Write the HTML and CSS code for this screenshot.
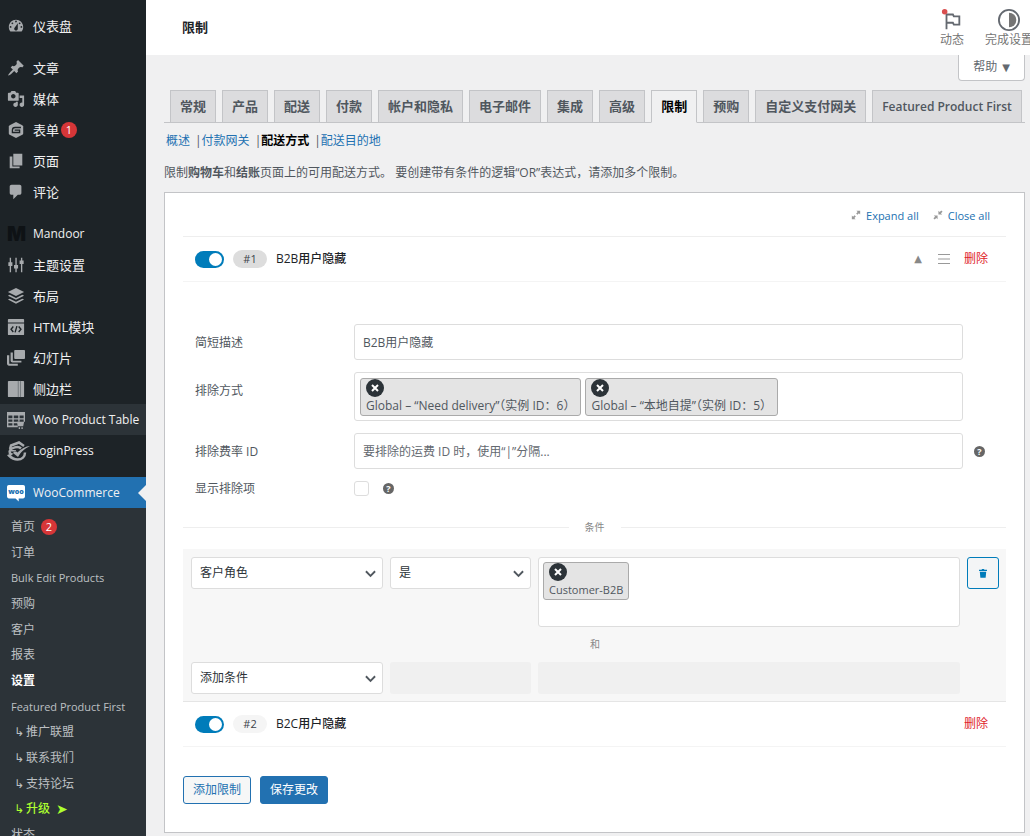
FILE: index.html
```html
<!DOCTYPE html>
<html lang="zh-CN">
<head>
  <meta charset="utf-8">
  <title>限制 - WooCommerce</title>
  <link rel="stylesheet" href="styles.css">
</head>
<body>
  <div class="admin">
    <nav class="sidebar">
      <ul class="menu">
        <li><a href="#"><svg class="icon" viewBox="0 0 20 20"><path d="M3.76 16h12.48c1.1-1.37 1.76-3.11 1.76-5 0-4.42-3.58-8-8-8s-8 3.58-8 8c0 1.89.66 3.63 1.76 5zM10 4c.55 0 1 .45 1 1s-.45 1-1 1-1-.45-1-1 .45-1 1-1zM6 6c.55 0 1 .45 1 1s-.45 1-1 1-1-.45-1-1 .45-1 1-1zm8 0c.55 0 1 .45 1 1s-.45 1-1 1-1-.45-1-1 .45-1 1-1zm-5.37 5.55L12 7v6c0 1.1-.9 2-2 2s-2-.9-2-2c0-.57.24-1.08.63-1.45zM4 10c.55 0 1 .45 1 1s-.45 1-1 1-1-.45-1-1 .45-1 1-1zm12 0c.55 0 1 .45 1 1s-.45 1-1 1-1-.45-1-1 .45-1 1-1z"/></svg>仪表盘</a></li>
        <li class="separator"></li>
        <li><a href="#"><svg class="icon" viewBox="0 0 20 20"><path d="M10.44 3.02l1.82-1.82 6.36 6.35-1.83 1.82c-1.05-.68-2.48-.57-3.41.36l-.75.75c-.92.93-1.04 2.35-.35 3.41l-1.83 1.82-2.41-2.41-2.8 2.79c-.42.42-3.38 2.71-3.8 2.29s1.86-3.39 2.28-3.81l2.79-2.79L4.1 9.36l1.83-1.82c1.05.69 2.48.57 3.4-.36l.75-.75c.93-.92 1.05-2.35.36-3.41z"/></svg>文章</a></li>
        <li><a href="#"><svg class="icon" viewBox="0 0 20 20"><path d="M13 11V4c0-.55-.45-1-1-1h-1.67L9 1H5L3.67 3H2c-.55 0-1 .45-1 1v7c0 .55.45 1 1 1h10c.55 0 1-.45 1-1zM7 4.5c1.38 0 2.5 1.12 2.5 2.5S8.38 9.5 7 9.5 4.5 8.38 4.5 7 5.62 4.5 7 4.5zM14 6h5v10.5c0 1.38-1.12 2.5-2.5 2.5S14 17.88 14 16.5s1.12-2.5 2.5-2.5c.17 0 .34.02.5.05V9h-3V6zm-4 8.05V13h2v3.5c0 1.38-1.12 2.5-2.5 2.5S7 17.88 7 16.5 8.12 14 9.5 14c.17 0 .34.02.5.05z"/></svg>媒体</a></li>
        <li><a href="#"><svg class="icon" viewBox="0 0 20 20"><path d="M10 1l7 3.600q1 .6 1 1.600v7.600q0 1-1 1.600L10 19l-7-3.600q-1-.6-1-1.600V6.200q0-1 1-1.600z"/><path class="cut" d="M15.500 7.200H9q-3 0-3 3v2.600h8v-2.600H8.500"/></svg>表单<span class="badge">1</span></a></li>
        <li><a href="#"><svg class="icon" viewBox="0 0 20 20"><path d="M7 2h10v13H7zM3 5h3v11h8v2H3z"/></svg>页面</a></li>
        <li><a href="#"><svg class="icon" viewBox="0 0 20 20"><path d="M5 2h9c1.100 0 2 .9 2 2v7c0 1.100-.9 2-2 2h-2l-5 5v-5H5c-1.100 0-2-.9-2-2V4c0-1.100.9-2 2-2z"/></svg>评论</a></li>
        <li class="separator"></li>
        <li><a href="#" class="latin"><span class="icon mandoor-mark" aria-hidden="true">M</span>Mandoor</a></li>
        <li><a href="#"><svg class="icon" viewBox="0 0 20 20"><path d="M3 2h1.500v5H6v4H4.500v7H3v-7H1.500V7H3zM9.300 2h1.500v8h1.500v4h-1.500v4H9.300v-4H7.800v-4h1.500zM15.500 2H17v3h1.500v4H17v9h-1.500V9H14V5h1.500z"/></svg>主题设置</a></li>
        <li><a href="#"><svg class="icon" viewBox="0 0 20 20"><path d="M10 1l9 4.500-9 4.500-9-4.500zM3 8.700l7 3.500 7-3.500 2 1-9 4.600-9-4.600zM3 13l7 3.500 7-3.500 2 1-9 4.600L1 14z"/></svg>布局</a></li>
        <li><a href="#"><svg class="icon" viewBox="0 0 20 20"><path d="M2 1h16q1 0 1 1v3H1V2q0-1 1-1zM1 6h18v12q0 1-1 1H2q-1 0-1-1z"/><path class="cut" d="M7 9.500L4.500 12.500 7 15.500M13 9.500l2.500 3-2.500 3M11 9l-2 7"/></svg>HTML模块</a></li>
        <li><a href="#"><svg class="icon" viewBox="0 0 20 20"><path d="M9 1h10q1 0 1 1v8q0 1-1 1H9q-1 0-1-1V2q0-1 1-1zM4 4h2.500v9H16v2H6q-2 0-2-2zM0 7h2.500v9.500H12v2H2q-2 0-2-2z"/></svg>幻灯片</a></li>
        <li><a href="#"><svg class="icon" viewBox="0 0 20 20"><path d="M2 1h16q1 0 1 1v16q0 1-1 1H2q-1 0-1-1V2q0-1 1-1z"/><path class="fold" d="M12.500 1v18M15 1v18"/></svg>侧边栏</a></li>
        <li class="hovered"><a href="#" class="latin"><svg class="icon" viewBox="0 0 20 20"><path fill-rule="evenodd" d="M0 1h20v11h-1.500V9.500H14V12h-1.500V9.500H7.500V12H12v1.500H7.500V16H12v2H0zM1.500 5v3H6V5zm6 0v3h5V5zM14 5v3h4.500V5zM1.500 9.500V12H6V9.500zm0 4V16H6v-2.500z"/><path d="M11 12h8l-1 5h-6zM13 18h1.500v2H13zM16 18h1.500v2H16z"/></svg>Woo Product Table</a></li>
        <li><a href="#" class="latin"><svg class="icon login-icon" viewBox="0 0 24 20"><path class="stroke" d="M17 5L12 1.500 4 4.500 3 8M18 11.500c0 4-3 7-7.500 7-4 0-6.500-2-8.500-4l2-1.500C2 12 2 9 5 7.500c3-1.500 7-2 9 0"/><path d="M23 5c-4 0-9 3-12.500 6.500L8 9.500 6 12l5 4c3-5 6-8 12-11zM4 9h5v1.500H4z"/></svg>LoginPress</a></li>
        <li class="separator"></li>
        <li class="current"><a href="#" class="latin"><svg class="icon" viewBox="0 0 20 20"><path d="M2 1h16q2 0 2 2v11q0 2-2 2h-5v3.500L9.500 16H2q-2 0-2-2V3q0-2 2-2z"/><text x="10" y="11.500" text-anchor="middle">woo</text></svg>WooCommerce</a></li>
      </ul>
      <ul class="submenu">
        <li><a href="#">首页 <span class="badge">2</span></a></li>
        <li><a href="#">订单</a></li>
        <li><a href="#" class="latin">Bulk Edit Products</a></li>
        <li><a href="#">预购</a></li>
        <li><a href="#">客户</a></li>
        <li><a href="#">报表</a></li>
        <li><a href="#" class="active">设置</a></li>
        <li><a href="#" class="latin">Featured Product First</a></li>
        <li><a href="#" class="nested"><span class="hook">↳</span>推广联盟</a></li>
        <li><a href="#" class="nested"><span class="hook">↳</span>联系我们</a></li>
        <li><a href="#" class="nested"><span class="hook">↳</span>支持论坛</a></li>
        <li><a href="#" class="nested upgrade"><span class="hook">↳</span>升级<span class="dart">➤</span></a></li>
        <li><a href="#">状态</a></li>
      </ul>
    </nav>

    <main class="main">
      <header class="topbar">
        <h1>限制</h1>
        <div class="activity">
          <button type="button"><svg viewBox="0 0 24 24"><path class="line" d="M6 22V6h7l1 2h6v9h-6l-1-2H6" /><circle class="dot" cx="4" cy="3" r="3"/></svg>动态</button>
          <button type="button"><svg viewBox="0 0 24 24"><circle class="line" cx="12" cy="12" r="11"/><path d="M12 4a8 8 0 0 1 0 16z"/></svg>完成设置</button>
        </div>
      </header>

      <div class="screen-meta"><button type="button">帮助 <span>▼</span></button></div>

      <nav class="tabs">
        <a href="#">常规</a>
        <a href="#">产品</a>
        <a href="#">配送</a>
        <a href="#">付款</a>
        <a href="#">帐户和隐私</a>
        <a href="#">电子邮件</a>
        <a href="#">集成</a>
        <a href="#">高级</a>
        <a href="#" class="active">限制</a>
        <a href="#">预购</a>
        <a href="#">自定义支付网关</a>
        <a href="#" class="latin">Featured Product First</a>
      </nav>

      <ul class="subnav">
        <li><a href="#">概述</a></li>
        <li><a href="#">付款网关</a></li>
        <li><a href="#" class="active">配送方式</a></li>
        <li><a href="#">配送目的地</a></li>
      </ul>

      <p class="intro">限制<strong>购物车</strong>和<strong>结账</strong>页面上的可用配送方式。 要创建带有条件的逻辑“OR”表达式，请添加多个限制。</p>

      <form class="panel">
        <div class="panel-tools">
          <a href="#"><svg viewBox="0 0 12 12"><path d="M6.500 1H11v4.500L9.500 4 7.700 5.800 6.200 4.300 8 2.500zM5.500 11H1V6.500L2.500 8l1.800-1.800 1.500 1.500L4 9.500z"/></svg>Expand all</a>
          <a href="#"><svg viewBox="0 0 12 12"><path d="M6.500 5.500V1L8 2.500 10 .5 11.500 2l-2 2L11 5.500zM5.500 6.500V11L4 9.500l-2 2L.5 10l2-2L1 6.500z"/></svg>Close all</a>
        </div>

        <div class="rule">
          <input type="checkbox" class="toggle" aria-label="启用限制 1" checked>
          <span class="number open">#1</span>
          <strong>B2B用户隐藏</strong>
          <div class="rule-actions">
            <span class="caret">▲</span>
            <svg class="handle" viewBox="0 0 12 12"><path d="M0 1.500h12M0 6h12M0 10.500h12"/></svg>
            <a href="#">删除</a>
          </div>
        </div>

        <div class="fields">
          <label for="desc">简短描述</label>
          <input type="text" id="desc" class="text" value="B2B用户隐藏">
          <span></span>

          <span class="label">排除方式</span>
          <div class="chips">
            <span class="chip"><button type="button" aria-label="移除"><svg viewBox="0 0 8 8"><path d="M1 1l6 6M7 1L1 7"/></svg></button>Global – “Need delivery”（实例 ID：6）</span>
            <span class="chip"><button type="button" aria-label="移除"><svg viewBox="0 0 8 8"><path d="M1 1l6 6M7 1L1 7"/></svg></button>Global – “本地自提”（实例 ID：5）</span>
          </div>
          <span></span>

          <label for="rates">排除费率 ID</label>
          <input type="text" id="rates" class="text" placeholder="要排除的运费 ID 时，使用“|”分隔...">
          <span class="help">?</span>

          <label for="show">显示排除项</label>
          <div class="check"><input type="checkbox" id="show"><span class="help">?</span></div>
        </div>

        <div class="divider"><span>条件</span></div>

        <div class="conditions">
          <div class="condition">
            <div class="select"><select aria-label="条件"><option>客户角色</option></select><svg viewBox="0 0 12 8"><path d="M1 1l5 5 5-5"/></svg></div>
            <div class="select"><select aria-label="比较"><option>是</option></select><svg viewBox="0 0 12 8"><path d="M1 1l5 5 5-5"/></svg></div>
            <div class="chips tall">
              <span class="chip latin"><button type="button" aria-label="移除"><svg viewBox="0 0 8 8"><path d="M1 1l6 6M7 1L1 7"/></svg></button>Customer-B2B</span>
            </div>
            <button type="button" class="trash" aria-label="删除条件"><svg viewBox="0 0 10 12"><path d="M3.500 1h3v1H10v1.500H0V2h3.500zM1 4.500h8L8.300 12H1.700z"/></svg></button>
          </div>
          <div class="and">和</div>
          <div class="condition">
            <div class="select"><select aria-label="添加条件"><option>添加条件</option></select><svg viewBox="0 0 12 8"><path d="M1 1l5 5 5-5"/></svg></div>
            <div class="blank"></div>
            <div class="blank"></div>
          </div>
        </div>

        <div class="rule">
          <input type="checkbox" class="toggle" aria-label="启用限制 2" checked>
          <span class="number">#2</span>
          <strong>B2C用户隐藏</strong>
          <div class="rule-actions"><a href="#">删除</a></div>
        </div>

        <div class="buttons">
          <button type="button" class="button">添加限制</button>
          <button type="submit" class="button primary">保存更改</button>
        </div>
      </form>
    </main>
  </div>
</body>
</html>
```
FILE: styles.css
```css
:root {
  --blue: #2271b1;
  --toggle: #007cba;
  --side: #1d2327;
  --side-sub: #2c3338;
  --icon: #a7aaad;
  --line: #eee;
  --field: #ddd;
}

* {
  box-sizing: border-box;
}

body {
  margin: 0;
  background: #f0f0f1;
  color: #50575e;
  font-family: "Open Sans", "Noto Sans CJK SC", sans-serif;
  font-size: 12px;
  line-height: 18px;
}

ul {
  list-style: none;
  margin: 0;
  padding: 0;
}

a {
  color: var(--blue);
  text-decoration: none;
}

button,
input,
select {
  font: inherit;
  color: inherit;
  margin: 0;
}

.admin {
  display: flex;
  height: 100vh;
  overflow: hidden;
}

/* Latin-only labels run one size smaller than the Chinese ones */
.latin {
  font-size: 11px;
}

.menu .latin,
.tabs .latin {
  font-size: 12px;
}

/* Sidebar */

.sidebar {
  flex: none;
  width: 146px;
  background: var(--side);
}

.menu {
  padding-top: 10px;
  font-size: 13px;
}

.menu a {
  display: flex;
  align-items: center;
  gap: 8px;
  height: 31px;
  padding-left: 7px;
  color: #f0f0f1;
  white-space: nowrap;
}

.separator {
  height: 11px;
}

.icon {
  flex: none;
  width: 18px;
  height: 18px;
  fill: var(--icon);
}

.icon .cut {
  fill: none;
  stroke: var(--side);
  stroke-width: 1.5;
}

.icon .fold {
  stroke: #6f7679;
  stroke-width: 1;
}

.icon .stroke {
  fill: none;
  stroke: var(--icon);
  stroke-width: 2.5;
}

.login-icon {
  width: 24px;
  height: 20px;
  margin-right: -6px;
}

.mandoor-mark {
  color: #0e1215;
  font-family: Inter, sans-serif;
  font-size: 20px;
  font-weight: 900;
  text-align: center;
}

.hovered {
  background: var(--side-sub);
}

.current {
  position: relative;
  background: var(--blue);
}

.current::after {
  content: "";
  position: absolute;
  right: 0;
  top: 8px;
  border: 8px solid transparent;
  border-left: 0;
  border-right-color: #f0f0f1;
}

.current .icon {
  fill: #fff;
}

.current text {
  fill: var(--blue);
  font-size: 8px;
  font-weight: 800;
}

.badge {
  display: inline-block;
  min-width: 16px;
  height: 16px;
  border-radius: 8px;
  background: #d63638;
  color: #fff;
  font-size: 11px;
  line-height: 16px;
  text-align: center;
}

.menu .badge {
  margin-left: -6px;
}

.submenu {
  display: flex;
  flex-direction: column;
  justify-content: space-between;
  height: 346px;
  padding: 7px 0;
  background: var(--side-sub);
}

.submenu a {
  display: flex;
  align-items: center;
  gap: 6px;
  height: 24px;
  padding-left: 11px;
  color: #bdc0c3;
  white-space: nowrap;
}

.submenu .active {
  color: #fff;
  font-weight: 700;
}

.submenu .nested {
  gap: 2px;
  padding-left: 14px;
}

.hook {
  font-family: "DejaVu Sans", sans-serif;
}

.submenu .upgrade {
  color: #adff2f;
  font-weight: 500;
}

.dart {
  margin-left: 4px;
  font-family: "DejaVu Sans", sans-serif;
  font-size: 14px;
}

/* Header */

.main {
  flex: 1;
  min-width: 0;
}

.topbar {
  display: flex;
  justify-content: space-between;
  height: 55px;
  padding-left: 36px;
  background: #fff;
}

.topbar h1 {
  margin: 0;
  color: #1d2327;
  font-size: 13px;
  line-height: 55px;
}

.activity {
  display: flex;
  gap: 21px;
  margin-right: -3px;
}

.activity button {
  display: flex;
  flex-direction: column;
  align-items: center;
  padding: 9px 0 0;
  border: 0;
  background: none;
  color: #757575;
  line-height: 18px;
  white-space: nowrap;
}

.activity svg {
  width: 22px;
  height: 22px;
  fill: #757575;
}

.activity .line {
  fill: none;
  stroke: #646970;
  stroke-width: 2;
}

.activity .dot {
  fill: #d94f4f;
}

.screen-meta {
  display: flex;
  justify-content: flex-end;
  margin-right: 5px;
}

.screen-meta button {
  height: 26px;
  padding: 0 14px;
  border: 1px solid #c3c4c7;
  border-top: 0;
  border-radius: 0 0 4px 4px;
  background: #fff;
  color: #646970;
}

.screen-meta span {
  font-family: "DejaVu Sans", sans-serif;
  font-size: 10px;
  margin-left: 2px;
}

/* Tabs */

.tabs {
  display: flex;
  gap: 6px;
  margin: 9px 5px 0 18px;
  padding-left: 6px;
  border-bottom: 1px solid #c3c4c7;
  font-size: 13px;
  font-weight: 600;
}

.tabs a {
  height: 33px;
  margin-bottom: -1px;
  padding: 0 9px;
  border: 1px solid #c3c4c7;
  background: #dcdcde;
  color: #50575e;
  line-height: 31px;
  white-space: nowrap;
}

.tabs .active {
  border-bottom-color: #f0f0f1;
  background: #f0f0f1;
  color: #000;
}

.subnav {
  display: flex;
  margin: 9px 20px 0;
}

.subnav li + li::before {
  content: "|";
  margin-left: 5px;
}

.subnav .active {
  color: #000;
  font-weight: 700;
}

.intro {
  margin: 14px 18px 10px;
}

/* Restrictions panel */

.panel {
  margin: 0 5px 0 18px;
  padding: 0 18px 28px;
  border: 1px solid #c3c4c7;
  background: #fff;
}

.panel-tools {
  display: flex;
  justify-content: flex-end;
  gap: 14px;
  padding: 14px 16px 11px;
  border-bottom: 1px solid var(--line);
  font-size: 11px;
}

.panel-tools svg {
  width: 10px;
  height: 10px;
  margin-right: 5px;
  fill: #999;
}

.rule {
  display: flex;
  align-items: center;
  gap: 9px;
  height: 45px;
  padding: 0 18px 0 12px;
  border-bottom: 1px solid #f4f4f4;
  color: #1d2327;
}

.toggle {
  appearance: none;
  width: 29px;
  height: 17px;
  padding: 2px;
  border-radius: 9px;
  background: #aaa;
}

.toggle::before {
  content: "";
  display: block;
  width: 13px;
  height: 13px;
  border-radius: 50%;
  background: #fff;
}

.toggle:checked {
  background: var(--toggle);
}

.toggle:checked::before {
  margin-left: auto;
}

.number {
  width: 34px;
  border-radius: 9px;
  background: #f5f5f5;
  color: #3c434a;
  font-size: 11px;
  text-align: center;
}

.number.open {
  background: #ddd;
}

.rule strong {
  font-weight: 500;
}

.rule-actions {
  display: flex;
  align-items: center;
  gap: 14px;
  margin-left: auto;
}

.rule-actions a {
  color: #e0242b;
}

.caret {
  margin-right: 2px;
  color: #888;
  font-family: "DejaVu Sans", sans-serif;
  font-size: 10px;
}

.handle {
  width: 12px;
  height: 12px;
  stroke: #999;
  stroke-width: 1;
}

.fields {
  display: grid;
  grid-template-columns: 148px 1fr 32px;
  column-gap: 11px;
  row-gap: 12px;
  align-items: center;
  padding: 42px 0 0 12px;
}

.fields label {
  line-height: 15px;
}

.text,
.chips,
.select select {
  border: 1px solid var(--field);
  border-radius: 3px;
  background: #fff;
}

.text {
  width: 100%;
  height: 36px;
  padding: 0 8px;
}

.text::placeholder {
  color: #646970;
  opacity: 1;
}

.label {
  align-self: start;
  padding-top: 10px;
}

.chips {
  display: flex;
  align-items: flex-start;
  gap: 4px;
  min-height: 49px;
  padding: 5px 5px 4px;
}

.chips.tall {
  min-height: 70px;
  padding: 4px;
}

.chip {
  height: 38px;
  padding: 0 5px;
  border: 1px solid #aaa;
  border-radius: 3px;
  background: #e4e4e4;
  white-space: nowrap;
}

.chip button {
  display: flex;
  align-items: center;
  justify-content: center;
  width: 18px;
  height: 18px;
  padding: 0;
  border: 0;
  border-radius: 50%;
  background: #2c3338;
}

.chip svg {
  width: 8px;
  height: 8px;
  stroke: #fff;
  stroke-width: 2;
}

.help {
  width: 11px;
  height: 11px;
  border-radius: 50%;
  background: #666;
  color: #fff;
  font-size: 9px;
  font-weight: 700;
  line-height: 11px;
  text-align: center;
}

.check {
  display: flex;
  align-items: center;
  gap: 14px;
}

.check input {
  appearance: none;
  width: 15px;
  height: 15px;
  border: 1px solid var(--field);
  border-radius: 3px;
  background: #fff;
}

.divider {
  display: flex;
  align-items: center;
  gap: 16px;
  margin: 22px 0 13px;
  color: #888;
  font-size: 10px;
}

.divider::before,
.divider::after {
  content: "";
  flex: 1;
  border-top: 1px solid var(--line);
}

.conditions {
  padding: 8px 7px 7px 8px;
  border-bottom: 1px solid #e5e5e5;
  background: #f7f7f7;
}

.condition {
  display: grid;
  grid-template-columns: 192px 141px 1fr 32px;
  column-gap: 7px;
  align-items: start;
}

.select {
  position: relative;
}

.select select {
  appearance: none;
  display: block;
  width: 100%;
  height: 32px;
  padding: 0 8px;
  color: #2c3338;
}

.select svg {
  position: absolute;
  right: 7px;
  top: 13px;
  width: 11px;
  height: 8px;
  fill: none;
  stroke: #50575e;
  stroke-width: 2;
  pointer-events: none;
}

.trash {
  display: flex;
  align-items: center;
  justify-content: center;
  height: 32px;
  padding: 0;
  border: 1px solid var(--toggle);
  border-radius: 3px;
  background: #f3f5f6;
}

.trash svg {
  width: 8px;
  height: 10px;
  fill: var(--toggle);
}

.and {
  height: 35px;
  color: #888;
  font-size: 10px;
  line-height: 35px;
  text-align: center;
}

.blank {
  height: 32px;
  border-radius: 3px;
  background: #f0f0f0;
}

.buttons {
  display: flex;
  gap: 9px;
  margin-top: 29px;
}

.button {
  height: 28px;
  padding: 0 9px;
  border: 1px solid var(--blue);
  border-radius: 3px;
  background: #f6f7f7;
  color: var(--blue);
}

.button.primary {
  background: var(--blue);
  color: #fff;
}
```
